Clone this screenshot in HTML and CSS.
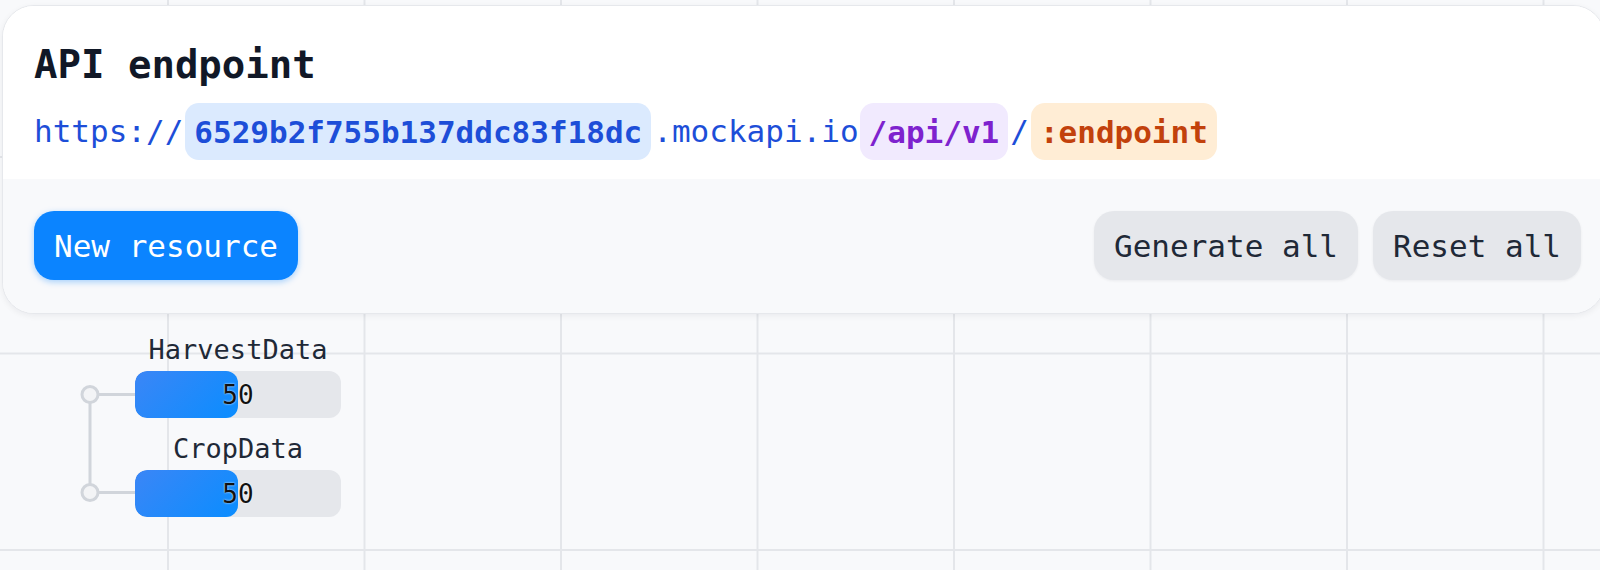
FILE: index.html
```html
<!DOCTYPE html>
<html lang="en">
<head>
<meta charset="utf-8">
<title>API endpoint</title>
<link rel="stylesheet" href="styles.css">
</head>
<body>
<div class="canvas">
  <svg class="links" width="80" height="140" viewBox="70 380 80 140" aria-hidden="true">
    <line x1="90" y1="403" x2="90" y2="485" />
    <line x1="98" y1="394.5" x2="136" y2="394.5" />
    <line x1="98" y1="492.5" x2="136" y2="492.5" />
    <circle cx="90" cy="394.5" r="8" />
    <circle cx="90" cy="492.5" r="8" />
  </svg>

  <div class="nodes">
    <div class="node">
      <div class="node-label">HarvestData</div>
      <div class="bar"><div class="bar-fill" style="width:50%"></div><span class="bar-value">50</span></div>
    </div>
    <div class="node">
      <div class="node-label">CropData</div>
      <div class="bar"><div class="bar-fill" style="width:50%"></div><span class="bar-value">50</span></div>
    </div>
  </div>

  <section class="card">
    <div class="card-top">
      <h1 class="title">API endpoint</h1>
      <div class="url">
        <span class="url-text">https://</span><span class="chip chip-blue">6529b2f755b137ddc83f18dc</span><span class="url-text">.mockapi.io</span><span class="chip chip-purple">/api/v1</span><span class="url-text">/</span><span class="chip chip-orange">:endpoint</span>
      </div>
    </div>
    <div class="card-bottom">
      <button class="btn btn-primary">New resource</button>
      <div class="btn-group">
        <button class="btn btn-secondary">Generate all</button>
        <button class="btn btn-secondary">Reset all</button>
      </div>
    </div>
  </section>
</div>
</body>
</html>
```

FILE: styles.css
```css
* { box-sizing: border-box; }

html, body {
  margin: 0;
  padding: 0;
  width: 1600px;
  height: 570px;
  overflow: hidden;
}

body {
  font-family: "DejaVu Sans Mono", "Liberation Mono", monospace;
  color: #111827;
}

.canvas {
  position: relative;
  width: 1600px;
  height: 570px;
  overflow: hidden;
  background-color: #f8f9fb;
  background-image:
    linear-gradient(to right, #e4e6ea 0, #e4e6ea 2px, transparent 2px),
    linear-gradient(to bottom, #e4e6ea 0, #e4e6ea 2px, transparent 2px);
  background-size: 196.5px 196.5px;
  background-position: 167px 156px;
}

.card {
  position: absolute;
  left: 2px;
  top: 5px;
  width: 1603px;
  border-radius: 32px;
  background: #ffffff;
  border: 1px solid #e6e8ec;
  box-shadow: 0 2px 6px rgba(15, 23, 42, 0.06);
  overflow: hidden;
}

.card-top {
  padding: 36px 32px 19px 31px;
  background: #ffffff;
}

.title {
  margin: 0;
  font-size: 39px;
  font-weight: 700;
  line-height: 46px;
  color: #111827;
}

.url {
  margin-top: 15px;
  display: flex;
  align-items: center;
  height: 57px;
  font-size: 31px;
  color: #1d4ed8;
}

.url-text {
  line-height: 57px;
}

.chip {
  display: inline-flex;
  align-items: center;
  height: 57px;
  padding: 0 9px;
  border-radius: 14px;
  margin: 0 2px;
  font-weight: 700;
}

.chip-blue {
  background: #dbeafe;
  color: #1d4ed8;
}

.chip-purple {
  background: #f1eafe;
  color: #7e22ce;
  margin-left: 1px;
}

.chip-orange {
  background: #ffedd5;
  color: #c2410c;
}

.card-bottom {
  display: flex;
  justify-content: space-between;
  align-items: center;
  padding: 32px 23px 33px 31px;
  background: #f8f9fb;
}

.btn-group {
  display: flex;
  gap: 15px;
}

.btn {
  height: 69px;
  padding: 0 20px;
  border: 0;
  border-radius: 20px;
  font-family: "DejaVu Sans Mono", "Liberation Mono", monospace;
  font-size: 31px;
  font-weight: 500;
  cursor: pointer;
}

.btn-primary {
  background: #0b84ff;
  color: #ffffff;
  box-shadow: 0 2px 6px rgba(11, 132, 255, 0.35);
}

.btn-secondary {
  background: #e5e7eb;
  color: #1f2937;
  box-shadow: 0 1px 3px rgba(15, 23, 42, 0.06);
}

.links {
  position: absolute;
  left: 70px;
  top: 380px;
  overflow: visible;
}

.links line {
  stroke: #d1d5db;
  stroke-width: 3;
}

.links circle {
  fill: #f3f4f6;
  stroke: #d1d5db;
  stroke-width: 3;
}

.nodes {
  position: absolute;
  left: 135px;
  top: 334px;
  display: flex;
  flex-direction: column;
  gap: 15px;
}

.node {
  display: flex;
  flex-direction: column;
  align-items: center;
  gap: 5px;
  width: 206px;
}

.node-label {
  font-size: 27px;
  line-height: 32px;
  color: #1f2937;
}

.bar {
  position: relative;
  width: 206px;
  height: 47px;
  border-radius: 12px;
  background: #e5e7eb;
  overflow: hidden;
  display: flex;
  align-items: center;
  justify-content: center;
}

.bar-fill {
  position: absolute;
  left: 0;
  top: 0;
  bottom: 0;
  border-radius: 12px;
  background: linear-gradient(135deg, #3b86f6 0%, #0a8dff 100%);
}

.bar-value {
  position: relative;
  font-size: 26px;
  color: #111111;
  text-shadow: 0 0 2px #ffffff;
}
```
